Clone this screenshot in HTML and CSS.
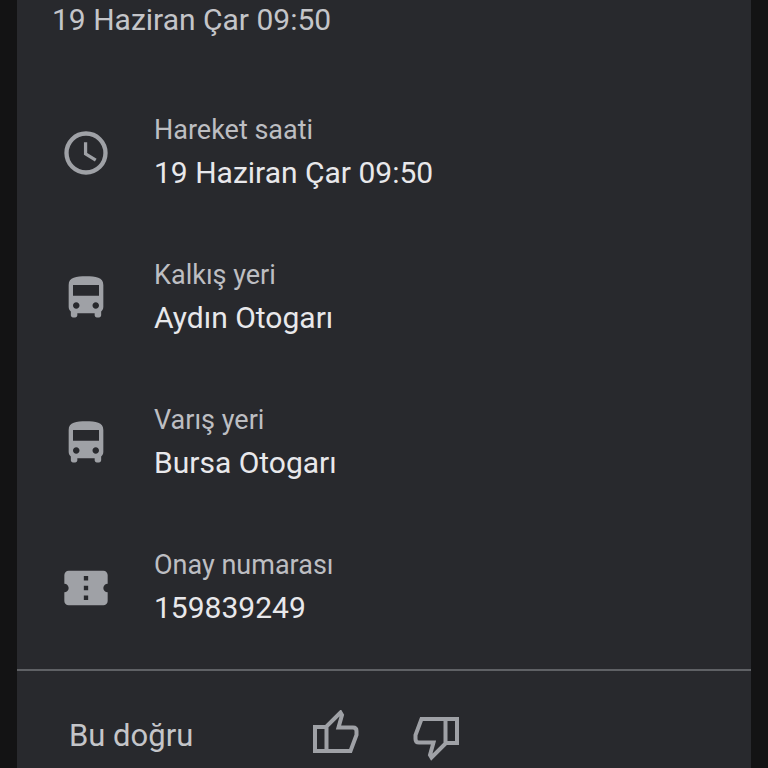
FILE: index.html
```html
<!DOCTYPE html>
<html lang="tr">
<head>
  <meta charset="UTF-8">
  <meta name="viewport" content="width=device-width, initial-scale=1">
  <title>Otobüs bileti</title>
  <link rel="stylesheet" href="styles.css">
</head>
<body>

<main class="card">
  <p class="date">19 Haziran Çar 09:50</p>

  <dl class="details">
    <div class="row">
      <svg class="icon" viewBox="0 0 24 24" aria-hidden="true">
        <circle cx="12" cy="12" r="9" fill="none" stroke="currentColor" stroke-width="2"/>
        <path d="M11.8 7v5.4l4.7 2.9" fill="none" stroke="currentColor" stroke-width="1.5"/>
      </svg>
      <dt>Hareket saati</dt>
      <dd>19 Haziran Çar 09:50</dd>
    </div>

    <div class="row">
      <svg class="icon" viewBox="0 0 24 24" aria-hidden="true">
        <path fill="currentColor" d="M4 16c0 .88.39 1.67 1 2.22V20c0 .55.45 1 1 1h1c.55 0 1-.45 1-1v-1h8v1c0 .55.45 1 1 1h1c.55 0 1-.45 1-1v-1.78c.61-.55 1-1.34 1-2.22V6c0-3.5-3.58-4-8-4s-8 .5-8 4v10zm3.5 1c-.83 0-1.5-.67-1.5-1.5S6.67 14 7.5 14s1.5.67 1.5 1.5S8.33 17 7.5 17zm9 0c-.83 0-1.5-.67-1.5-1.5s.67-1.5 1.5-1.5 1.5.67 1.5 1.5-.67 1.5-1.5 1.5zm1.5-6H6V6h12v5z"/>
      </svg>
      <dt>Kalkış yeri</dt>
      <dd>Aydın Otogarı</dd>
    </div>

    <div class="row">
      <svg class="icon" viewBox="0 0 24 24" aria-hidden="true">
        <path fill="currentColor" d="M4 16c0 .88.39 1.67 1 2.22V20c0 .55.45 1 1 1h1c.55 0 1-.45 1-1v-1h8v1c0 .55.45 1 1 1h1c.55 0 1-.45 1-1v-1.78c.61-.55 1-1.34 1-2.22V6c0-3.5-3.58-4-8-4s-8 .5-8 4v10zm3.5 1c-.83 0-1.5-.67-1.5-1.5S6.67 14 7.5 14s1.5.67 1.5 1.5S8.33 17 7.5 17zm9 0c-.83 0-1.5-.67-1.5-1.5s.67-1.5 1.5-1.5 1.5.67 1.5 1.5-.67 1.5-1.5 1.5zm1.5-6H6V6h12v5z"/>
      </svg>
      <dt>Varış yeri</dt>
      <dd>Bursa Otogarı</dd>
    </div>

    <div class="row">
      <svg class="icon" viewBox="0 0 24 24" aria-hidden="true">
        <path fill="currentColor" d="M22 10V6c0-1.11-.9-2-2-2H4c-1.1 0-1.99.89-1.99 2v4c1.1 0 1.99.9 1.99 2s-.89 2-2 2v4c0 1.1.9 2 2 2h16c1.1 0 2-.9 2-2v-4c-1.1 0-2-.9-2-2s.9-2 2-2zm-9 7.5h-2v-2h2v2zm0-4.5h-2v-2h2v2zm0-4.5h-2v-2h2v2z"/>
      </svg>
      <dt>Onay numarası</dt>
      <dd>159839249</dd>
    </div>
  </dl>

  <div class="feedback">
    <span class="question">Bu doğru</span>
    <button type="button" aria-label="Evet, doğru">
      <svg class="icon" viewBox="10 9 52 52" aria-hidden="true">
        <path fill="none" stroke="currentColor" stroke-width="4" d="M15 26H26L40.5 11.5L42 14L38.5 26.5H53Q56.5 26.5 56.5 30V34L50.5 50H15ZM26.5 26V50"/>
      </svg>
    </button>
    <button type="button" aria-label="Hayır, yanlış">
      <svg class="icon" viewBox="10 9 52 52" aria-hidden="true">
        <path transform="rotate(180 35.500 34)" fill="none" stroke="currentColor" stroke-width="4" d="M15 26H26L40.5 11.5L42 14L38.5 26.5H53Q56.5 26.5 56.5 30V34L50.5 50H15ZM26.5 26V50"/>
      </svg>
    </button>
  </div>
</main>

</body>
</html>
```
FILE: styles.css
```css
* {
  box-sizing: border-box;
}

body {
  margin: 0;
  background: #131314;
  color: #e8e8eb;
  font-family: Roboto, "Liberation Sans", sans-serif;
  font-size: 30px;
  line-height: 40px;
}

.card {
  min-height: 100vh;
  margin: 0 17px;
  background: #28292d;
}

.date {
  margin: 0;
  padding: 0 35px;
  color: #c4c5c9;
}

.details {
  display: flex;
  flex-direction: column;
  gap: 59px;
  margin: 0;
  padding: 70px 43px 38px;
}

.row {
  display: grid;
  grid-template-columns: 52px 1fr;
  grid-template-rows: 40px 46px;
  column-gap: 42px;
  align-items: center;
}

.icon {
  display: block;
  width: 52px;
  height: 52px;
  color: #9fa1a6;
}

.row .icon {
  grid-row: 1 / 3;
}

dt {
  color: #bdbec2;
  font-size: 27px;
}

dd {
  margin: 0;
}

.feedback {
  display: flex;
  align-items: center;
  gap: 49px;
  padding: 39px 52px 7px;
  border-top: 2px solid #5f6165;
}

.question {
  width: 192px;
  color: #c4c5c9;
  font-size: 31px;
}

button {
  padding: 0;
  border: 0;
  background: none;
  cursor: pointer;
}
```
